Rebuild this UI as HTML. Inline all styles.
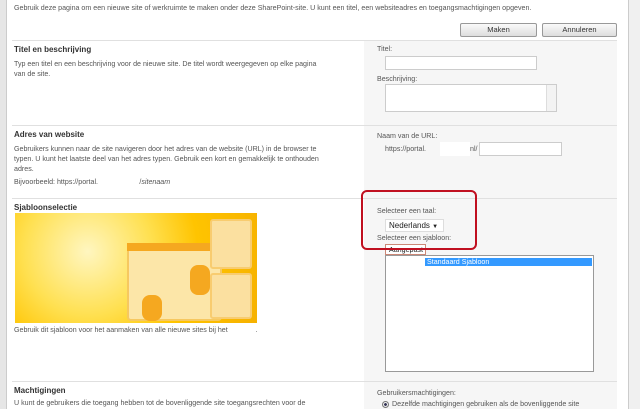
<!DOCTYPE html>
<html><head><meta charset="utf-8"><style>
*{margin:0;padding:0;box-sizing:border-box}
body{width:640px;height:409px;overflow:hidden;background:#fff;font-family:"Liberation Sans",sans-serif;font-size:7.1px;color:#555;position:relative}
.a{position:absolute}
.h{font-weight:bold;color:#333;font-size:8px}
.gray{background:#f6f6f6}
.line{height:1px;background:#e0e0e0}
.btn{border:1px solid #999;background:linear-gradient(#fafafa,#ddd);text-align:center;font-size:7.5px;color:#333;line-height:12px;border-radius:2px}
.in{background:#fff;border:1px solid #ccc}
</style></head><body>
<div class="a" style="left:0;top:0;width:7px;height:409px;background:#e6e6e6;border-right:1px solid #ccc"></div>
<div class="a" style="left:628px;top:0;width:12px;height:409px;background:#f0f0f0;border-left:1px solid #ccc"></div>
<div class="a" style="left:14px;top:4px">Gebruik deze pagina om een nieuwe site of werkruimte te maken onder deze SharePoint-site. U kunt een titel, een websiteadres en toegangsmachtigingen opgeven.</div>
<div class="a btn" style="left:460px;top:23px;width:77px;height:14px">Maken</div>
<div class="a btn" style="left:542px;top:23px;width:75px;height:14px">Annuleren</div>
<div class="a gray" style="left:364px;top:40px;width:253px;height:369px"></div>
<div class="a line" style="left:12px;top:40px;width:605px"></div>
<div class="a line" style="left:12px;top:125px;width:605px"></div>
<div class="a line" style="left:12px;top:198px;width:605px"></div>
<div class="a line" style="left:12px;top:381px;width:605px"></div>
<div class="a h" style="left:14px;top:45px">Titel en beschrijving</div>
<div class="a" style="left:14px;top:59px;width:312px;line-height:10px">Typ een titel en een beschrijving voor de nieuwe site. De titel wordt weergegeven op elke pagina van de site.</div>
<div class="a" style="left:377px;top:45px">Titel:</div>
<div class="a in" style="left:385px;top:56px;width:152px;height:14px"></div>
<div class="a" style="left:377px;top:75px">Beschrijving:</div>
<div class="a in" style="left:385px;top:84px;width:172px;height:28px"><div style="position:absolute;right:0;top:0;width:10px;height:26px;background:#f3f3f3;border-left:1px solid #ddd"></div></div>
<div class="a h" style="left:14px;top:130px">Adres van website</div>
<div class="a" style="left:14px;top:144px;width:322px;line-height:10px">Gebruikers kunnen naar de site navigeren door het adres van de website (URL) in de browser te typen. U kunt het laatste deel van het adres typen. Gebruik een kort en gemakkelijk te onthouden adres.</div>
<div class="a" style="left:14px;top:178px">Bijvoorbeeld: https://portal.&nbsp;&nbsp;&nbsp;&nbsp;&nbsp;&nbsp;&nbsp;&nbsp;&nbsp;&nbsp;&nbsp;&nbsp;&nbsp;&nbsp;&nbsp;&nbsp;&nbsp;&nbsp;&nbsp;&nbsp;&nbsp;/<i>sitenaam</i></div>
<div class="a" style="left:377px;top:132px">Naam van de URL:</div>
<div class="a" style="left:385px;top:145px">https://portal.</div>
<div class="a" style="left:440px;top:142px;width:30px;height:14px;background:#fff"></div>
<div class="a" style="left:470px;top:145px">nl/</div>
<div class="a in" style="left:479px;top:142px;width:83px;height:14px"></div>
<div class="a h" style="left:14px;top:203px">Sjabloonselectie</div>
<div class="a" style="left:15px;top:213px;width:242px;height:110px;overflow:hidden;background:radial-gradient(circle at 30% 35%,#fff6c0 0%,#ffe050 35%,#ffc400 60%,#f6b100 100%)">
<div class="a" style="left:112px;top:30px;width:95px;height:78px;background:#fce6a8;border:2px solid #f6c860;border-radius:4px"></div>
<div class="a" style="left:112px;top:30px;width:95px;height:8px;background:#f5a820"></div>
<div class="a" style="left:195px;top:6px;width:42px;height:50px;background:#fbe0a0;border:2px solid #f8cc70;border-radius:3px"></div>
<div class="a" style="left:195px;top:60px;width:42px;height:46px;background:#fbe0a0;border:2px solid #f8cc70;border-radius:3px"></div>
<div class="a" style="left:175px;top:52px;width:20px;height:30px;background:#f5a820;border-radius:8px"></div>
<div class="a" style="left:127px;top:82px;width:20px;height:26px;background:#f5a820;border-radius:8px"></div>
</div>
<div class="a" style="left:14px;top:326px">Gebruik dit sjabloon voor het aanmaken van alle nieuwe sites bij het&nbsp;&nbsp;&nbsp;&nbsp;&nbsp;&nbsp;&nbsp;&nbsp;&nbsp;&nbsp;&nbsp;&nbsp;&nbsp;&nbsp;.</div>
<div class="a" style="left:377px;top:207px">Selecteer een taal:</div>
<div class="a" style="left:385px;top:219px;width:59px;height:13px;background:#fff;border:1px solid #ddd;color:#222;padding:1px 3px;font-size:8px;white-space:nowrap">Nederlands <span style="font-size:6px">▼</span></div>
<div class="a" style="left:377px;top:234px">Selecteer een sjabloon:</div>
<div class="a" style="left:385px;top:244px;width:41px;height:11px;background:#fff;border:1px solid #c87;color:#222;padding:1px 3px;white-space:nowrap;overflow:hidden">Aangepast</div>
<div class="a" style="left:361px;top:190px;width:116px;height:60px;border:2px solid #c01020;border-radius:6px"></div>
<div class="a in" style="left:385px;top:255px;width:209px;height:117px;border-color:#999">
<div style="margin:2px 1px;height:8px;background:#3399ff;color:#fff;padding-left:40px;line-height:8px">Standaard Sjabloon</div>
<div style="position:absolute;left:1px;top:2px;width:38px;height:8px;background:#fff"></div></div>
<div class="a h" style="left:14px;top:386px">Machtigingen</div>
<div class="a" style="left:14px;top:399px">U kunt de gebruikers die toegang hebben tot de bovenliggende site toegangsrechten voor de</div>
<div class="a" style="left:377px;top:389px">Gebruikersmachtigingen:</div>
<div class="a" style="left:382px;top:401px;width:7px;height:7px;border-radius:50%;border:1px solid #777;background:radial-gradient(#335 35%,#eee 45%)"></div>
<div class="a" style="left:392px;top:400px">Dezelfde machtigingen gebruiken als de bovenliggende site</div>
</body></html>
